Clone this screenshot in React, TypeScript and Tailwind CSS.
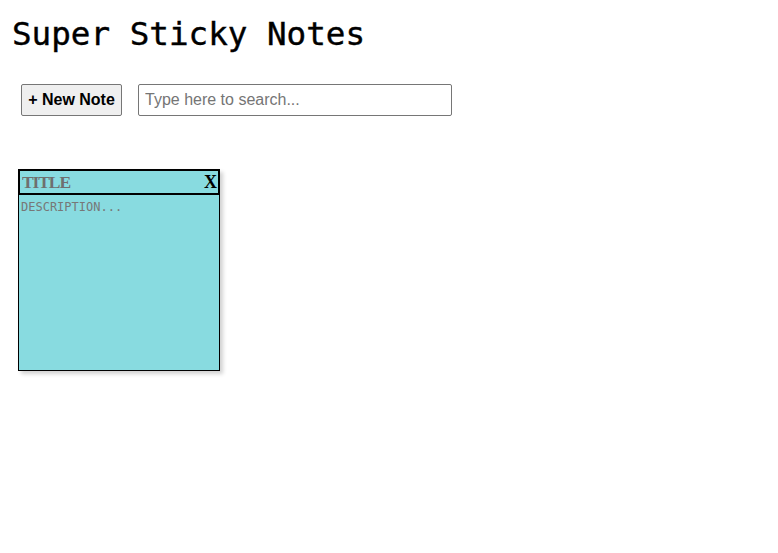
import React, { useState } from 'react';

interface Note {
  id: number;
  title: string;
  description: string;
}

const NoteCard: React.FC<{ note: Note; onRemove: (id: number) => void }> = ({ note, onRemove }) => {
  return (
    <div className="w-[202px] h-[202px] flex flex-col bg-[#88dbe0] shadow-[3px_3px_4px_rgba(0,0,0,0.18)]">
      {/* 제목 줄 */}
      <div className="h-[26px] flex items-center border-2 border-black pl-[2px] pr-[1px]">
        <input
          defaultValue={note.title}
          placeholder="TITLE"
          className="flex-1 min-w-0 bg-transparent outline-none font-['Liberation_Serif',serif] font-bold text-[17.5px] tracking-[-1.1px] text-[#6f6f6f] placeholder:text-[#6f6f6f]"
        />
        <button
          onClick={() => onRemove(note.id)}
          className="font-['Liberation_Serif',serif] font-bold text-[18px] leading-none text-black"
        >
          X
        </button>
      </div>
      {/* 내용 */}
      <textarea
        defaultValue={note.description}
        placeholder="DESCRIPTION..."
        className="flex-1 resize-none bg-transparent border border-t-0 border-black outline-none px-[2px] pt-[3px] font-['DejaVu_Sans_Mono',monospace] text-[12px] text-[#777] placeholder:text-[#777]"
      />
    </div>
  );
};

export default function App() {
  const [notes, setNotes] = useState<Note[]>([{ id: 1, title: '', description: '' }]);
  const [search, setSearch] = useState('');

  const addNote = () => {
    setNotes([...notes, { id: Date.now(), title: '', description: '' }]);
  };

  const removeNote = (id: number) => {
    setNotes(notes.filter((n) => n.id !== id));
  };

  return (
    <div className="min-h-screen bg-white text-black">
      <h1 className="pl-3 pt-[14px] font-['DejaVu_Sans_Mono',monospace] font-medium text-[32.6px] leading-[40px] [-webkit-text-stroke:0.4px_black]">
        Super Sticky Notes
      </h1>

      <div className="flex items-center gap-4 pl-[21px] mt-[30px]">
        <button
          onClick={addNote}
          className="w-[101px] h-[32px] bg-[#efefef] border border-[#767676] rounded-[2px] font-['Liberation_Sans',sans-serif] font-bold text-[16px]"
        >
          + New Note
        </button>
        <input
          value={search}
          onChange={(e) => setSearch(e.target.value)}
          placeholder="Type here to search..."
          className="w-[314px] h-[32px] border border-[#767676] rounded-[2px] px-[6px] font-['Liberation_Sans',sans-serif] text-[16px] placeholder:text-[#757575] outline-none"
        />
      </div>

      <div className="flex flex-wrap gap-4 pl-[18px] mt-[53px]">
        {notes.map((note) => (
          <NoteCard key={note.id} note={note} onRemove={removeNote} />
        ))}
      </div>
    </div>
  );
}
